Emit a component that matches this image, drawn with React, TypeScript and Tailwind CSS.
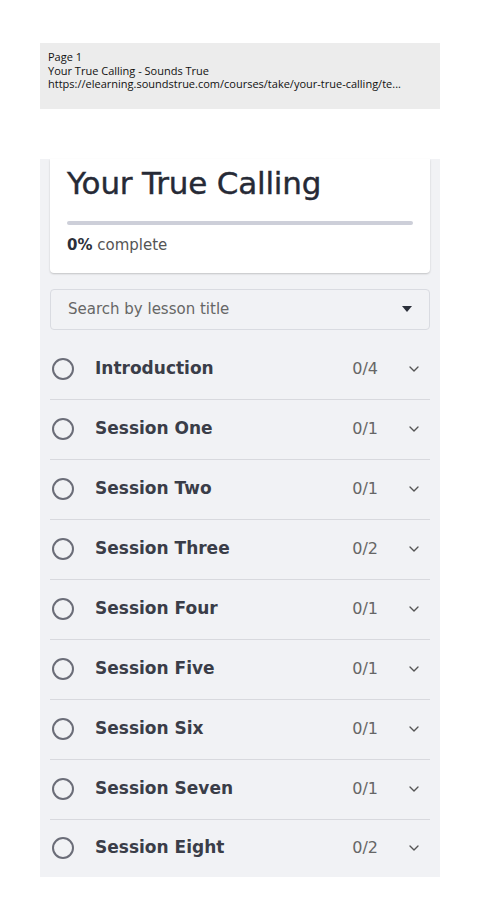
import { ChevronDown } from "lucide-react";

const sessions = [
  { title: "Introduction", count: "0/4" },
  { title: "Session One", count: "0/1" },
  { title: "Session Two", count: "0/1" },
  { title: "Session Three", count: "0/2" },
  { title: "Session Four", count: "0/1" },
  { title: "Session Five", count: "0/1" },
  { title: "Session Six", count: "0/1" },
  { title: "Session Seven", count: "0/1" },
  { title: "Session Eight", count: "0/2" },
];

const App = () => {
  return (
    <div className="min-h-[921px] w-[485px] bg-white pt-[43px] font-['DejaVu_Sans',sans-serif]">
      {/* Print header */}
      <div className="ml-[40px] h-[66px] w-[400px] bg-[#ececec] px-[8px] pt-[7px] font-['Open_Sans',sans-serif] text-[11px] leading-[13.5px] text-[#111]">
        <div>Page 1</div>
        <div>Your True Calling - Sounds True</div>
        <div className="truncate">https://elearning.soundstrue.com/courses/take/your-true-calling/te...</div>
      </div>

      {/* Course panel */}
      <div className="ml-[40px] mt-[50px] w-[400px] bg-[#f1f2f5] px-[10px]">
        <div className="rounded-b-[4px] bg-white px-[17px] pt-[6px] pb-[16px] shadow-[0_1px_2px_rgba(0,0,0,0.2)]">
          <h1 className="text-[31px] leading-[36px] font-normal tracking-[-0.2px] text-[#262a36] [-webkit-text-stroke:0.4px_#262a36]">
            Your True Calling
          </h1>
          <div className="mt-[20px] h-[4px] rounded-full bg-[#cdcfd9]" />
          <div className="mt-[9px] text-[15px] text-[#555]">
            <span className="font-bold text-[#2b2f3a]">0%</span> complete
          </div>
        </div>

        <div className="mt-[16px] flex h-[41px] items-center justify-between rounded-[4px] border border-[#d9dbe1] px-[17px]">
          <span className="text-[15px] text-[#666]">Search by lesson title</span>
          <svg width="10" height="6" viewBox="0 0 10 6">
            <path d="M0 0h10L5 6z" fill="#2b2f3a" />
          </svg>
        </div>

        <div className="mt-[10px]">
          {sessions.map((s, i) => (
            <div
              key={s.title}
              className={`flex items-center ${i < sessions.length - 1 ? "h-[60px] border-b border-[#d8d9de]" : "h-[57px]"}`}
            >
              <div className="ml-[2px] h-[22px] w-[22px] rounded-full border-[2px] border-[#6b6d78]" />
              <span className="ml-[21px] text-[17px] font-bold text-[#3a3d48]">{s.title}</span>
              <span className="ml-auto text-[16px] text-[#666]">{s.count}</span>
              <ChevronDown className="ml-[28px] mr-[8px] h-[16px] w-[16px] text-[#555]" strokeWidth={2} />
            </div>
          ))}
        </div>
      </div>
    </div>
  );
};

export default App;
